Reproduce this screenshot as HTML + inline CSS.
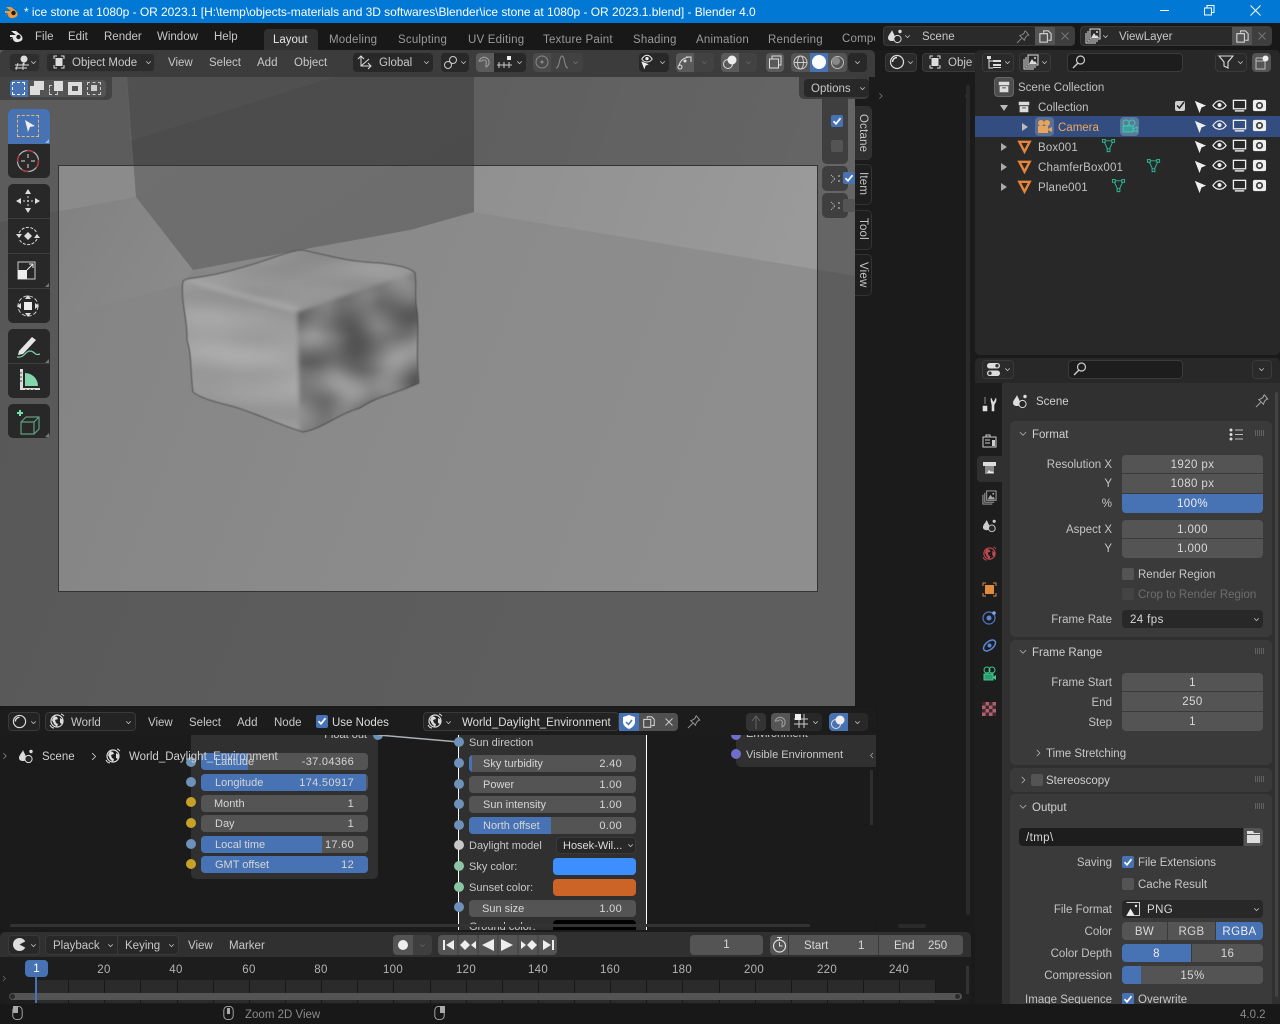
<!DOCTYPE html>
<html><head><meta charset="utf-8"><title>Blender</title>
<style>
html,body{margin:0;padding:0;width:1280px;height:1024px;overflow:hidden;background:#1a1a1a}
body{position:relative;font-family:"Liberation Sans",sans-serif;font-size:11.5px;color:#c8c8c8}
div,p,svg.i{position:absolute}
p{margin:1px 0 0;white-space:nowrap;line-height:14px;letter-spacing:0}
.d{color:#9a9a9a;letter-spacing:.2px}
.w{color:#e6e6e6}
.b{background:#282828;border:1px solid #3a3a3a;border-radius:4px;box-sizing:border-box}
.f{background:#545454;color:#d8d8d8;text-align:center;line-height:20px;letter-spacing:.4px;white-space:nowrap;box-sizing:border-box}
.blue{background:#4772b3;color:#f0f0f0}
.l{left:1010px;width:102px;text-align:right;color:#c4c4c4}
.tb{left:8px;width:42px;background:#282828}
.n{background:#545454;height:17px;border-radius:4px;overflow:hidden}
.n div{left:0;top:0;height:17px;background:#4772b3}
.n p{top:1px;color:#d6d6d6;font-size:11px}
.n p.v{right:14px;letter-spacing:.3px}
.nt{font-size:11px}
.so{width:10px;height:10px;border-radius:5px;background:#6d91b8}
.ck{width:12px;height:12px;background:#545454;border-radius:2px}
.ck.on{background:#4772b3}
.ck svg{position:absolute;left:0;top:0}
.num{top:962px;width:40px;text-align:center;color:#b4b4b4;letter-spacing:.3px}
.tick{width:1px;background:#181818;top:980px;height:23px}
.tab{left:855px;width:17px;background:#1e1e1e;border:1px solid #333;border-left:0;border-radius:0 5px 5px 0;box-sizing:border-box}
.tab p{transform:rotate(90deg);transform-origin:0 0;left:15px;top:6px;color:#c4c4c4;letter-spacing:.2px}
svg{overflow:visible}
</style></head><body>
<svg width="0" height="0" style="position:absolute">
<defs>
<symbol id="ch" viewBox="0 0 16 16"><path d="M4 6l4 4 4-4" fill="none" stroke="currentColor" stroke-width="1.4"/></symbol>
<symbol id="cr" viewBox="0 0 16 16"><path d="M6 3l5 5-5 5" fill="none" stroke="currentColor" stroke-width="1.2"/></symbol>
<symbol id="cd" viewBox="0 0 16 16"><path d="M3 5l5 5 5-5" fill="none" stroke="currentColor" stroke-width="1.2"/></symbol>
<symbol id="sc" viewBox="0 0 16 16"><path d="M5 2c1 3 3 5 3 8 0 2-1 3-3 3s-4-1-4-3c0-3 3-5 4-8z" fill="currentColor"/><circle cx="13" cy="3.5" r="1.7" fill="currentColor"/><circle cx="10.5" cy="11" r="3.6" fill="#282828" stroke="currentColor"/></symbol>
<symbol id="gl" viewBox="0 0 16 16"><circle cx="8" cy="8" r="6" fill="none" stroke="currentColor" stroke-width="1.2"/><path d="M5 3l3 1 1 2-3 1 1 3 2 1-1 3-3-3-2-4zM11 5l3 2-1 4-2-1z" fill="currentColor"/><path d="M1 12c1 2 2 3 4 3M15 3c-1-1-2-2-3-2" fill="none" stroke="currentColor"/></symbol>
<symbol id="pi" viewBox="0 0 16 16"><path d="M1 15l5-5M4 7l5 5 1-3 3-3 1 1-4-5-1 1 0 1-2 2z" fill="none" stroke="currentColor" stroke-width="1"/></symbol>
<symbol id="co" viewBox="0 0 16 16"><path d="M6 4V2h5l3 3v7h-3M2 5h8v9H2z" fill="none" stroke="currentColor" stroke-width="1.1"/></symbol>
<symbol id="x" viewBox="0 0 16 16"><path d="M4 4l8 8M12 4l-8 8" fill="none" stroke="currentColor" stroke-width="1.1"/></symbol>
<symbol id="ar" viewBox="0 0 16 16"><path d="M2 2l12 5-5 2-2 6z" fill="currentColor"/></symbol>
<symbol id="ey" viewBox="0 0 16 16"><path d="M1 8c2-3 4-5 7-5s5 2 7 5c-2 3-4 4-7 4s-5-1-7-4z" fill="none" stroke="currentColor" stroke-width="1.3"/><circle cx="8" cy="7.5" r="2.2" fill="currentColor"/></symbol>
<symbol id="mo" viewBox="0 0 16 16"><rect x="1.500" y="2.500" width="13" height="9" fill="none" stroke="currentColor" stroke-width="1.4"/><path d="M3 13h10v1.500H3z" fill="currentColor"/></symbol>
<symbol id="cm" viewBox="0 0 16 16"><rect x="1" y="2" width="14" height="12" rx="2" fill="currentColor"/><circle cx="8" cy="8" r="3.800" fill="#3a3a3a"/><circle cx="8" cy="8" r="2" fill="currentColor"/></symbol>
<symbol id="ob" viewBox="0 0 16 16"><path d="M2.5 3h11L8 13.5z" fill="none" stroke="currentColor" stroke-width="2.6"/></symbol>
<symbol id="me" viewBox="0 0 16 16"><path d="M3 3h10L8 14z" fill="none" stroke="currentColor"/><path d="M1.5 1.5h3v3h-3zM11.5 1.5h3v3h-3zM6.5 11.5h3v3h-3z" fill="#282828" stroke="currentColor"/></symbol>
<symbol id="cl" viewBox="0 0 16 16"><path d="M2 2h12v4H2z" fill="currentColor"/><path d="M3 7h10v7H3z" fill="currentColor"/><path d="M6 9h4" stroke="#333"/></symbol>
<symbol id="se" viewBox="0 0 16 16"><circle cx="9.5" cy="6" r="4" fill="none" stroke="currentColor" stroke-width="1.2"/><path d="M7 9l-5 5" stroke="currentColor" stroke-width="1.4"/></symbol>
<symbol id="vl" viewBox="0 0 16 16"><path d="M5 1h10v10H5z" fill="none" stroke="currentColor"/><path d="M3 3v10h10M1 5v10h10" fill="none" stroke="currentColor"/><path d="M6 10l3-5 2 3 1-1 2 3z" fill="currentColor"/><circle cx="12" cy="4" r="1" fill="currentColor"/></symbol>
<symbol id="vp" viewBox="0 0 16 16"><path d="M1 11h14M1 14h12M4 9l-2 7M9 9v7" stroke="currentColor" fill="none" stroke-width=".9"/><circle cx="10" cy="5" r="3.5" fill="currentColor"/><path d="M10 8v3" stroke="currentColor"/></symbol>
<symbol id="mm" viewBox="0 0 16 16"><path d="M3 5V2h3M10 2h3v3M13 11v3h-3M6 14H3v-3" fill="none" stroke="currentColor"/><rect x="4.5" y="4" width="7" height="8" fill="currentColor"/></symbol>
<symbol id="nd" viewBox="0 0 16 16"><circle cx="8" cy="8" r="6.5" fill="none" stroke="currentColor" stroke-width="1.2"/><path d="M3.5 8A4.5 4.5 0 0 1 8 3.5" fill="none" stroke="currentColor" stroke-width="1.5"/></symbol>
<symbol id="ms" viewBox="0 0 16 16"><rect x="3" y="1" width="10" height="14" rx="4" fill="none" stroke="currentColor"/></symbol>
<symbol id="fi" viewBox="0 0 16 16"><path d="M1 2h14l-5 6v6l-4-2V8z" fill="none" stroke="currentColor" stroke-width="1.1"/></symbol>
<symbol id="ol" viewBox="0 0 16 16"><path d="M1 2h4v3H1zM7 6h8v2H7zM7 10h8v2H7zM7 14h8v-1H7z" fill="currentColor"/><path d="M3 5v9h4M3 7h4" fill="none" stroke="currentColor"/></symbol>
<symbol id="ck" viewBox="0 0 12 12"><path d="M2.5 6.2l2.5 2.6 4.5-5.6" fill="none" stroke="#fff" stroke-width="1.7"/></symbol>
<symbol id="dt" viewBox="0 0 12 8"><path d="M1 1h1M3 1h1M5 1h1M7 1h1M9 1h1M1 3h1M3 3h1M5 3h1M7 3h1M9 3h1M1 5h1M3 5h1M5 5h1M7 5h1M9 5h1" stroke="currentColor"/></symbol>
<symbol id="bl" viewBox="0 0 16 16"><path d="M1 7h6L2 3h5l5 4c2 2 2 5 0 6s-5 2-7 0c-1-1-1-2-1-3L1 12l3-3H1z" fill="currentColor"/><circle cx="9.5" cy="9" r="2.2" fill="#181818"/></symbol>
</defs></svg>

<!-- title bar -->
<div style="left:0;top:0;width:1280px;height:23px;background:#0078d4"></div>
<svg class="i" style="left:4px;top:4px;color:#ef9a3c" width="16" height="16"><use href="#bl"/></svg>
<p style="left:24px;top:4px;color:#fff;font-size:12px;letter-spacing:-.04px">* ice stone at 1080p - OR 2023.1 [H:\temp\objects-materials and 3D softwares\Blender\ice stone at 1080p - OR 2023.1.blend] - Blender 4.0</p>
<div style="left:1160px;top:10px;width:9px;height:1px;background:#fff"></div>
<svg class="i" style="left:1204px;top:5px" width="11" height="11"><path d="M.5 3h7v7h-7zM3 3V.5h7v7H8" fill="none" stroke="#fff"/></svg>
<svg class="i" style="left:1250px;top:5px" width="11" height="11"><path d="M.5.5l10 10M10.500.5l-10 10" stroke="#fff"/></svg>

<!-- top bar -->
<div style="left:0;top:23px;width:1280px;height:27px;background:#181818"></div>
<svg class="i" style="left:9px;top:28px;color:#e6e6e6" width="16" height="16"><use href="#bl"/></svg>
<p style="left:35px;top:29px">File</p><p style="left:68px;top:29px">Edit</p><p style="left:104px;top:29px">Render</p><p style="left:157px;top:29px">Window</p><p style="left:214px;top:29px">Help</p>
<div style="left:264px;top:29px;width:54px;height:21px;background:#303030;border-radius:4px 4px 0 0"></div>
<p class="w" style="left:273px;top:32px">Layout</p>
<p class="d" style="left:329px;top:32px">Modeling</p><p class="d" style="left:398px;top:32px">Sculpting</p><p class="d" style="left:468px;top:32px">UV Editing</p><p class="d" style="left:543px;top:32px">Texture Paint</p><p class="d" style="left:633px;top:32px">Shading</p><p class="d" style="left:696px;top:32px">Animation</p><p class="d" style="left:768px;top:32px">Rendering</p>
<div style="left:842px;top:30px;width:33px;height:18px;overflow:hidden"><p class="d" style="left:0;top:1px">Compositing</p></div>
<!-- scene selectors -->
<div class="b" style="left:883px;top:26px;width:192px;height:20px;background:#2a2a2a"></div>
<svg class="i" style="left:887px;top:28px;color:#ddd" width="16" height="16"><use href="#sc"/></svg><svg class="i" style="left:903px;top:32px;color:#ccc" width="9" height="9"><use href="#ch"/></svg>
<p style="left:922px;top:29px">Scene</p>
<svg class="i" style="left:1016px;top:29px;color:#888" width="15" height="15"><use href="#pi"/></svg>
<div style="left:1035px;top:27px;width:20px;height:18px;background:#545454"></div>
<svg class="i" style="left:1038px;top:29px;color:#ddd" width="15" height="15"><use href="#co"/></svg>
<div style="left:1055px;top:27px;width:20px;height:18px;background:#3e3e3e;border-radius:0 4px 4px 0"></div>
<svg class="i" style="left:1058px;top:29px;color:#777" width="14" height="14"><use href="#x"/></svg>
<div class="b" style="left:1080px;top:26px;width:192px;height:20px;background:#2a2a2a"></div>
<svg class="i" style="left:1085px;top:28px;color:#ddd" width="16" height="16"><use href="#vl"/></svg><svg class="i" style="left:1101px;top:32px;color:#ccc" width="9" height="9"><use href="#ch"/></svg>
<p style="left:1119px;top:29px">ViewLayer</p>
<div style="left:1232px;top:27px;width:20px;height:18px;background:#545454"></div>
<svg class="i" style="left:1235px;top:29px;color:#ddd" width="15" height="15"><use href="#co"/></svg>
<div style="left:1252px;top:27px;width:20px;height:18px;background:#3e3e3e;border-radius:0 4px 4px 0"></div>
<svg class="i" style="left:1255px;top:29px;color:#777" width="14" height="14"><use href="#x"/></svg>

<!-- 3D viewport -->
<svg class="i" style="left:0;top:50px" width="856" height="656" viewBox="0 50 856 656">
<defs>
<linearGradient id="gf" x1="0" y1="0" x2="1" y2=".3"><stop offset="0" stop-color="#828282"/><stop offset=".6" stop-color="#8b8b8b"/><stop offset="1" stop-color="#8e8e8e"/></linearGradient>
<linearGradient id="gw" x1="0" y1="0" x2="1" y2=".2"><stop offset="0" stop-color="#8f8f8f"/><stop offset="1" stop-color="#9a9a9a"/></linearGradient>
<linearGradient id="gd" x1="0" y1="0" x2="1" y2="1"><stop offset="0" stop-color="#707070"/><stop offset="1" stop-color="#6c6c6c"/></linearGradient>
<linearGradient id="gl2" x1="0" y1="0" x2="1" y2=".4"><stop offset="0" stop-color="#7e7e7e"/><stop offset="1" stop-color="#8a8a8a"/></linearGradient>
<filter id="nr" x="0" y="0" width="100%" height="100%" color-interpolation-filters="sRGB"><feTurbulence type="fractalNoise" baseFrequency=".024 .03" numOctaves="1" seed="7"/><feColorMatrix values=".75 0 0 0 .09 .75 0 0 0 .09 .75 0 0 0 .09 0 0 0 0 1"/></filter>
<filter id="nl" x="0" y="0" width="100%" height="100%" color-interpolation-filters="sRGB"><feTurbulence type="fractalNoise" baseFrequency=".012 .035" numOctaves="1" seed="3"/><feColorMatrix values=".22 0 0 0 .51 .22 0 0 0 .51 .22 0 0 0 .51 0 0 0 0 1"/></filter>
<filter id="nt" x="0" y="0" width="100%" height="100%" color-interpolation-filters="sRGB"><feTurbulence type="fractalNoise" baseFrequency=".012 .045" numOctaves="1" seed="11"/><feColorMatrix values=".18 0 0 0 .49 .18 0 0 0 .49 .18 0 0 0 .49 0 0 0 0 1"/></filter>
<filter id="b2" x="-20%" y="-20%" width="140%" height="140%"><feGaussianBlur stdDeviation="3"/></filter>
<filter id="b3" x="-5%" y="-5%" width="110%" height="110%"><feGaussianBlur stdDeviation=".6"/></filter>
<filter id="b4" x="-5%" y="-5%" width="110%" height="110%"><feGaussianBlur stdDeviation="2.200"/></filter>
<clipPath id="cu"><path id="cup" d="M183 281C190 276 200 280 240 268 270 260 290 250 303 250 330 256 350 262 380 263 395 265 410 267 415 273 417 285 414 295 417 310 420 330 415 345 419 383 400 392 380 395 360 408 335 415 325 428 303 432 280 425 260 415 235 407 215 402 200 398 193 392 190 370 192 355 187 340 188 320 180 300 183 281Z"/></clipPath>
<clipPath id="top"><path d="M175 240H425V272L297 314 180 280Z"/></clipPath>
<clipPath id="rt"><path d="M297 312L420 270V440H300Z"/></clipPath>
<clipPath id="lt"><path d="M175 280L297 312 303 440H175Z"/></clipPath>
</defs>
<rect x="0" y="50" width="856" height="656" fill="url(#gf)"/>
<path d="M0 222L136 197 193 268 182 284 0 333Z" fill="url(#gl2)"/>
<path d="M0 50H125L136 197 0 222Z" fill="#8b8b8b"/>
<path d="M474 50H856V276L474 212Z" fill="url(#gw)"/>
<path d="M125 50H474V212L410 230 300 250 193 270 136 197Z" fill="url(#gd)"/>
<path d="M125 50H420L130 141Z" fill="#fff" opacity=".05"/>
<!-- cube -->
<g clip-path="url(#cu)"><g filter="url(#b4)">
<g clip-path="url(#top)"><rect x="170" y="240" width="260" height="80" filter="url(#nt)"/>
<path d="M184 283L297 312" stroke="#b4b4b4" stroke-width="6" filter="url(#b2)"/></g>
<g clip-path="url(#lt)"><rect x="170" y="270" width="140" height="170" filter="url(#nl)"/></g>
<g clip-path="url(#rt)"><rect x="295" y="260" width="130" height="180" filter="url(#nr)"/></g>
</g></g>
<use href="#cup" fill="none" stroke="#444" stroke-opacity=".75" stroke-width="1.100" filter="url(#b3)"/>
<!-- passepartout -->
<path fill-rule="evenodd" d="M0 50H856V706H0ZM59 165V591H817V165Z" fill="#1c1c1c" fill-opacity=".42"/>
<rect x="58.500" y="165.500" width="759" height="426" fill="none" stroke="#333"/>
</svg>
<div style="left:855px;top:50px;width:23px;height:656px;background:#1b1b1b"></div>
<!-- header -->
<div style="left:0;top:50px;width:875px;height:27px;background:#3c3c3c;border-radius:5px 5px 0 0"></div>
<div style="left:0;top:77px;width:112px;height:23px;background:rgba(62,62,62,.85);border-radius:0 0 5px 0"></div>
<div class="b" style="left:9px;top:53px;width:31px;height:19px;background:#2e2e2e"></div>
<svg class="i" style="left:14px;top:54px;color:#ddd" width="16" height="16"><use href="#vp"/></svg><svg class="i" style="left:29px;top:58px;color:#ccc" width="9" height="9"><use href="#ch"/></svg>
<div class="b" style="left:46px;top:53px;width:109px;height:19px;background:#2c2c2c"></div>
<svg class="i" style="left:51px;top:54px;color:#ddd" width="16" height="16"><use href="#mm"/></svg>
<p style="left:72px;top:55px">Object Mode</p><svg class="i" style="left:144px;top:58px;color:#ccc" width="9" height="9"><use href="#ch"/></svg>
<p style="left:168px;top:55px">View</p><p style="left:209px;top:55px">Select</p><p style="left:257px;top:55px">Add</p><p style="left:294px;top:55px">Object</p>
<div style="left:353px;top:53px;width:80px;height:19px;background:#282828;border-radius:4px"></div>
<svg class="i" style="left:357px;top:54px" width="16" height="16"><path d="M4 2v10h10M4 12l8-7M1 5l3-3 3 3M11 9l3 3-3 3" fill="none" stroke="#ddd"/></svg>
<p style="left:379px;top:55px">Global</p><svg class="i" style="left:422px;top:58px;color:#ccc" width="9" height="9"><use href="#ch"/></svg>
<div style="left:441px;top:53px;width:28px;height:19px;background:#282828;border-radius:4px"></div>
<svg class="i" style="left:443px;top:55px" width="15" height="15"><circle cx="5" cy="10" r="3.500" fill="none" stroke="#ccc"/><circle cx="10" cy="5" r="3.500" fill="none" stroke="#ccc"/></svg><svg class="i" style="left:459px;top:58px;color:#ccc" width="9" height="9"><use href="#ch"/></svg>
<div style="left:476px;top:53px;width:18px;height:19px;background:#5a5a5a;border-radius:4px 0 0 4px"></div>
<svg class="i" style="left:477px;top:54px" width="16" height="16"><path d="M3 11a5 5 0 1 1 9 0l-2-2a2.500 2.500 0 1 0-5 0z" fill="none" stroke="#999" stroke-width="1.200" transform="rotate(40 8 8)"/></svg>
<div style="left:494px;top:53px;width:32px;height:19px;background:#282828;border-radius:0 4px 4px 0"></div>
<svg class="i" style="left:497px;top:55px" width="16" height="15"><path d="M0 10h15M2 7v6M7 7v6M12 7v6" stroke="#ccc" fill="none"/><rect x="10" y="1" width="4" height="4" fill="#eee"/></svg>
<svg class="i" style="left:515px;top:58px;color:#ccc" width="9" height="9"><use href="#ch"/></svg>
<div style="left:533px;top:53px;width:18px;height:19px;background:#4a4a4a;border-radius:4px 0 0 4px"></div>
<svg class="i" style="left:535px;top:55px" width="14" height="14"><circle cx="7" cy="7" r="6" fill="none" stroke="#888"/><circle cx="7" cy="7" r="1.500" fill="#888"/></svg>
<div style="left:551px;top:53px;width:32px;height:19px;background:#424242;border-radius:0 4px 4px 0"></div>
<svg class="i" style="left:555px;top:55px" width="15" height="14"><path d="M1 13c4 0 3-12 6-12s2 12 6 12" fill="none" stroke="#888"/></svg>
<svg class="i" style="left:571px;top:58px;color:#777" width="9" height="9"><use href="#ch"/></svg>
<div style="left:639px;top:53px;width:30px;height:19px;background:#282828;border-radius:4px"></div>
<svg class="i" style="left:641px;top:53px;color:#eee" width="12" height="12"><use href="#ey"/></svg><svg class="i" style="left:640px;top:60px;color:#eee" width="10" height="10"><use href="#ar"/></svg><svg class="i" style="left:658px;top:58px;color:#ccc" width="9" height="9"><use href="#ch"/></svg>
<div style="left:676px;top:53px;width:18px;height:19px;background:#5a5a5a;border-radius:4px 0 0 4px"></div>
<svg class="i" style="left:677px;top:54px" width="16" height="16"><path d="M2 12C3 6 8 3 13 3M9 3h5v5" fill="none" stroke="#ddd"/><circle cx="3" cy="13" r="2" fill="none" stroke="#ddd"/><circle cx="8" cy="7" r="1.500" fill="#ddd"/></svg>
<div style="left:694px;top:53px;width:20px;height:19px;background:#424242;border-radius:0 4px 4px 0"></div><svg class="i" style="left:700px;top:58px;color:#666" width="9" height="9"><use href="#ch"/></svg>
<div style="left:721px;top:53px;width:18px;height:19px;background:#5a5a5a;border-radius:4px 0 0 4px"></div>
<svg class="i" style="left:722px;top:54px" width="16" height="16"><circle cx="6" cy="10" r="4.500" fill="none" stroke="#ddd"/><circle cx="10" cy="6" r="4.500" fill="#eee"/></svg>
<div style="left:739px;top:53px;width:18px;height:19px;background:#424242;border-radius:0 4px 4px 0"></div><svg class="i" style="left:744px;top:58px;color:#666" width="9" height="9"><use href="#ch"/></svg>
<div style="left:766px;top:53px;width:18px;height:19px;background:#5a5a5a;border-radius:4px"></div>
<svg class="i" style="left:768px;top:55px" width="15" height="15"><path d="M4 4V1h9v9h-3M1.500 4h9v9h-9z" fill="none" stroke="#ddd"/></svg>
<div style="left:791px;top:53px;width:19px;height:19px;background:#545454;border-radius:4px 0 0 4px"></div>
<svg class="i" style="left:793px;top:55px" width="15" height="15"><circle cx="7.500" cy="7.500" r="6.500" fill="none" stroke="#ccc"/><ellipse cx="7.500" cy="7.500" rx="3" ry="6.500" fill="none" stroke="#ccc"/><path d="M1 7.500h13" stroke="#ccc"/></svg>
<div style="left:810px;top:53px;width:18px;height:19px;background:#4772b3"></div>
<div style="left:812px;top:55px;width:14px;height:14px;border-radius:7px;background:#fff"></div>
<div style="left:828px;top:53px;width:19px;height:19px;background:#545454;border-radius:0 4px 4px 0"></div>
<svg class="i" style="left:830px;top:55px" width="15" height="15"><circle cx="7.500" cy="7.500" r="6" fill="none" stroke="#bbb"/><circle cx="6" cy="6" r="4" fill="#888"/></svg>
<div style="left:848px;top:53px;width:19px;height:19px;background:#282828;border-radius:4px"></div><svg class="i" style="left:853px;top:58px;color:#ccc" width="9" height="9"><use href="#ch"/></svg>
<!-- select mode row -->
<div style="left:10px;top:80px;width:96px;height:17px;background:#545454;border-radius:4px"></div>
<div style="left:10px;top:80px;width:18px;height:17px;background:#4772b3;border-radius:4px 0 0 4px"></div>
<div style="left:12px;top:82px;width:13px;height:13px;border:1px dashed #fff;box-sizing:border-box"></div>
<svg class="i" style="left:30px;top:81px" width="15" height="15"><path d="M0 5h4V0h10v9h-4v5H0z" fill="#ddd"/></svg>
<div style="left:49px;top:85px;width:9px;height:10px;border:1px dashed #ccc;box-sizing:border-box"></div><div style="left:54px;top:81px;width:9px;height:10px;background:#ddd"></div>
<div style="left:68px;top:82px;width:14px;height:13px;background:#ddd"></div><div style="left:72px;top:86px;width:6px;height:5px;background:#555"></div>
<div style="left:87px;top:82px;width:14px;height:13px;border:1px dashed #ccc;box-sizing:border-box"></div><div style="left:91px;top:85px;width:6px;height:6px;background:#ccc"></div>
<!-- options -->
<div style="left:799px;top:77px;width:70px;height:22px;background:rgba(62,62,62,.95);border-radius:0 0 5px 5px"></div>
<div style="left:804px;top:79px;width:65px;height:18px;background:#282828;border-radius:4px"></div>
<p style="left:811px;top:81px">Options</p><svg class="i" style="left:858px;top:84px;color:#ccc" width="9" height="9"><use href="#ch"/></svg>
<!-- toolbar -->
<div class="tb" style="top:109px;height:69px;border-radius:5px"></div>
<div class="tb" style="top:109px;height:35px;background:#4772b3;border-radius:5px 5px 0 0"></div>
<div style="left:17px;top:115px;width:22px;height:22px;border:1px dashed #e6b873;box-sizing:border-box"></div>
<svg class="i" style="left:24px;top:120px;color:#eee" width="12" height="12"><path d="M1 0l10 6-5 1-2 5z" fill="#eee"/></svg>
<svg class="i" style="left:16px;top:149px" width="24" height="24"><circle cx="12" cy="12" r="10.500" fill="none" stroke="#bbb" stroke-width="1.200"/><circle cx="12" cy="12" r="10.500" fill="none" stroke="#c0323f" stroke-width="1.200" stroke-dasharray="7 9"/><path d="M12 5v4M12 15v4M5 12h4M15 12h4" stroke="#ddd"/></svg>
<div class="tb" style="top:184px;height:139px;border-radius:5px"></div>
<div style="left:8px;top:218px;width:42px;height:1px;background:#3e3e3e"></div><div style="left:8px;top:253px;width:42px;height:1px;background:#3e3e3e"></div><div style="left:8px;top:288px;width:42px;height:1px;background:#3e3e3e"></div>
<svg class="i" style="left:16px;top:189px" width="24" height="24"><path d="M12 0l3 5H9zM12 24l3-5H9zM0 12l5-3v6zM24 12l-5-3v6z" fill="#ddd"/><path d="M12 7v10M7 12h10" stroke="#ddd" stroke-dasharray="2 2"/></svg>
<svg class="i" style="left:16px;top:224px" width="24" height="24"><path d="M3 9a10 10 0 0 1 18 0M21 15a10 10 0 0 1-18 0" fill="none" stroke="#ddd" stroke-dasharray="3 1.500"/><path d="M12 8l4 4-4 4-4-4zM0 10l6 0-3 4zM24 14l-6 0 3-4z" fill="#ddd"/></svg>
<svg class="i" style="left:17px;top:261px" width="22" height="22"><rect x="1" y="1" width="17" height="17" fill="none" stroke="#ccc"/><rect x="1" y="9" width="9" height="9" fill="#eee"/><path d="M10 9l6-6M12 3h4v4" fill="none" stroke="#eee"/></svg>
<svg class="i" style="left:16px;top:294px" width="24" height="24"><circle cx="12" cy="12" r="10" fill="none" stroke="#ccc" stroke-dasharray="4 2"/><rect x="8" y="8" width="8" height="8" fill="#eee"/><path d="M12 1l3 4H9zM12 23l3-4H9zM1 12l4-3v6zM23 12l-4-3v6z" fill="#ddd"/></svg>
<div class="tb" style="top:329px;height:69px;border-radius:5px"></div><div style="left:8px;top:363px;width:42px;height:1px;background:#3e3e3e"></div>
<svg class="i" style="left:15px;top:334px" width="27" height="24"><path d="M4 17L17 3l4 3L8 20l-5 1z" fill="#e6e6e6"/><path d="M2 23c8 1 8-6 13-6s4 5 10 3" fill="none" stroke="#7fd0a8" stroke-width="1.200"/></svg>
<svg class="i" style="left:17px;top:368px" width="24" height="24"><path d="M3 1h3v19h17v2H3z" fill="#ddd"/><path d="M8 18V5a13 13 0 0 1 13 13z" fill="#82d8ac"/><path d="M3 5h2M3 9h2M3 13h2M9 21v1M13 21v1M17 21v1" stroke="#444"/></svg>
<div class="tb" style="top:404px;height:34px;border-radius:5px"></div>
<svg class="i" style="left:15px;top:409px" width="26" height="26"><path d="M2 4h6M5 1v6" stroke="#6fe0a8" stroke-width="2"/><path d="M6 13l5-5h13v12l-5 5H6zM6 13h13v12M19 13l5-5" fill="none" stroke="#5f9f7f" stroke-width="1.200"/></svg>
<svg class="i" style="left:45px;top:139px" width="4" height="4"><path d="M4 0v4H0z" fill="#9ab5e0"/></svg>
<svg class="i" style="left:45px;top:283px" width="4" height="4"><path d="M4 0v4H0z" fill="#777"/></svg>
<svg class="i" style="left:45px;top:359px" width="4" height="4"><path d="M4 0v4H0z" fill="#777"/></svg>
<svg class="i" style="left:45px;top:433px" width="4" height="4"><path d="M4 0v4H0z" fill="#777"/></svg>
<!-- panels over viewport -->
<div style="left:822px;top:98px;width:26px;height:66px;background:rgba(60,60,60,.92);border-radius:0 0 5px 5px"></div>
<div class="ck on" style="left:831px;top:115px"><svg width="12" height="12"><use href="#ck"/></svg></div>
<div class="ck" style="left:831px;top:140px"></div>
<div style="left:822px;top:166px;width:26px;height:25px;background:rgba(60,60,60,.92);border-radius:5px"></div>
<div style="left:822px;top:193px;width:26px;height:25px;background:rgba(60,60,60,.92);border-radius:5px"></div>
<svg class="i" style="left:830px;top:174px" width="12" height="10"><path d="M1 1l4 4-4 4" fill="none" stroke="#ccc" stroke-dasharray="1 1"/><path d="M8 2h2M8 7h2" stroke="#ccc"/></svg>
<svg class="i" style="left:830px;top:201px" width="12" height="10"><path d="M1 1l4 4-4 4" fill="none" stroke="#ccc" stroke-dasharray="1 1"/><path d="M8 2h2M8 7h2" stroke="#ccc"/></svg>
<div class="ck on" style="left:843px;top:172px"><svg width="12" height="12"><use href="#ck"/></svg></div>
<div class="ck" style="left:843px;top:199px;height:13px"></div>
<!-- side tabs -->
<div class="tab" style="top:106px;height:54px;background:#303030"><p>Octane</p></div>
<div class="tab" style="top:164px;height:41px"><p>Item</p></div>
<div class="tab" style="top:210px;height:40px"><p>Tool</p></div>
<div class="tab" style="top:254px;height:42px"><p>View</p></div>

<!-- narrow dark col -->
<div style="left:878px;top:50px;width:97px;height:882px;background:#1b1b1b"></div>
<div class="b" style="left:885px;top:53px;width:32px;height:19px;background:#2a2a2a"></div>
<svg class="i" style="left:889px;top:54px;color:#ddd" width="16" height="16"><use href="#nd"/></svg><svg class="i" style="left:906px;top:58px;color:#ccc" width="9" height="9"><use href="#ch"/></svg>
<div class="b" style="left:922px;top:53px;width:53px;height:19px;background:#2a2a2a;border-right:0;border-radius:4px 0 0 4px"></div>
<svg class="i" style="left:927px;top:54px;color:#ddd" width="16" height="16"><use href="#mm"/></svg>
<p style="left:948px;top:55px">Obje</p>
<svg class="i" style="left:876px;top:91px;color:#888" width="9" height="10"><use href="#cr"/></svg>
<svg class="i" style="left:963px;top:91px;color:#888;transform:scaleX(-1)" width="9" height="10"><use href="#cr"/></svg>
<div style="left:966px;top:85px;width:4px;height:830px;background:#2a2a2a;border-radius:2px"></div>
<div style="left:898px;top:924px;width:28px;height:4px;background:#2a2a2a;border-radius:2px"></div>

<!-- outliner -->
<div style="left:975px;top:50px;width:305px;height:305px;background:#282828;border-radius:5px"></div>
<div class="b" style="left:982px;top:53px;width:32px;height:19px;background:#2a2a2a"></div>
<svg class="i" style="left:986px;top:54px;color:#ddd" width="16" height="16"><use href="#ol"/></svg><svg class="i" style="left:1003px;top:58px;color:#ccc" width="9" height="9"><use href="#ch"/></svg>
<div class="b" style="left:1019px;top:53px;width:32px;height:19px;background:#2a2a2a"></div>
<svg class="i" style="left:1023px;top:54px;color:#ddd" width="16" height="16"><use href="#vl"/></svg><svg class="i" style="left:1040px;top:58px;color:#ccc" width="9" height="9"><use href="#ch"/></svg>
<div class="b" style="left:1067px;top:53px;width:116px;height:19px;background:#1d1d1d"></div>
<svg class="i" style="left:1071px;top:54px;color:#ccc" width="16" height="16"><use href="#se"/></svg>
<div class="b" style="left:1215px;top:53px;width:32px;height:19px;background:#2a2a2a"></div>
<svg class="i" style="left:1218px;top:54px;color:#ddd" width="16" height="16"><use href="#fi"/></svg><svg class="i" style="left:1236px;top:58px;color:#ccc" width="9" height="9"><use href="#ch"/></svg>
<div style="left:1252px;top:53px;width:19px;height:19px;background:#545454;border-radius:4px"></div>
<svg class="i" style="left:1254px;top:55px" width="15" height="15"><path d="M2 3h7M2 3v3h9v8H2V6" fill="none" stroke="#bbb"/><circle cx="11.500" cy="3.500" r="3" fill="#eee"/></svg>
<div style="left:975px;top:116px;width:305px;height:20.500px;background:#334d80"></div>
<div style="left:994px;top:77px;width:20px;height:20px;background:#4d4d4d;border-radius:4px;border:1px solid #666;box-sizing:border-box"></div>
<svg class="i" style="left:997px;top:80px;color:#ddd" width="14" height="14"><use href="#cl"/></svg>
<p style="left:1018px;top:80px;color:#c0c0c0">Scene Collection</p>
<svg class="i" style="left:1000px;top:104px" width="8" height="8"><path d="M0 1h8L4 7z" fill="#bbb"/></svg>
<svg class="i" style="left:1017px;top:100px;color:#ddd" width="14" height="14"><use href="#cl"/></svg>
<p style="left:1038px;top:100px;color:#c0c0c0">Collection</p>
<div class="ck" style="left:1175px;top:101px;width:10px;height:10px;background:#cfcfcf"></div>
<svg class="i" style="left:1176px;top:101px" width="9" height="9"><path d="M1 4.500l2.500 2.500 4.500-6" fill="none" stroke="#222" stroke-width="1.500"/></svg>
<svg class="i" style="left:1021px;top:123px" width="8" height="8"><path d="M1 0v8l6-4z" fill="#bbb"/></svg>
<div style="left:1035px;top:117px;width:19px;height:19px;background:#5b6f94;border-radius:4px"></div>
<svg class="i" style="left:1036px;top:118px" width="17" height="17"><circle cx="5" cy="5" r="3" fill="#e8a45a"/><circle cx="11" cy="5" r="3" fill="#e8a45a"/><rect x="2" y="8" width="10" height="7" fill="#e8a45a"/><path d="M12 11l4-2v5l-4-2z" fill="#e8a45a"/></svg>
<p style="left:1058px;top:120px;color:#eda85e">Camera</p>
<div style="left:1120px;top:117px;width:19px;height:19px;background:#5b7a99;border-radius:4px"></div>
<svg class="i" style="left:1121px;top:118px" width="17" height="17"><circle cx="5" cy="5" r="3" fill="none" stroke="#3dc8b4"/><circle cx="11" cy="5" r="3" fill="none" stroke="#3dc8b4"/><rect x="2" y="8" width="10" height="6" fill="#3f9f9b" stroke="#3dc8b4"/><path d="M12 11l4-2v5l-4-2z" fill="none" stroke="#3dc8b4"/></svg>
<svg class="i" style="left:1000px;top:143px" width="8" height="8"><path d="M1 0v8l6-4z" fill="#aaa"/></svg>
<svg class="i" style="left:1000px;top:163px" width="8" height="8"><path d="M1 0v8l6-4z" fill="#aaa"/></svg>
<svg class="i" style="left:1000px;top:183px" width="8" height="8"><path d="M1 0v8l6-4z" fill="#aaa"/></svg>
<svg class="i" style="left:1017px;top:139px;color:#e5843a" width="15" height="15"><use href="#ob"/></svg>
<svg class="i" style="left:1017px;top:159px;color:#e5843a" width="15" height="15"><use href="#ob"/></svg>
<svg class="i" style="left:1017px;top:179px;color:#e5843a" width="15" height="15"><use href="#ob"/></svg>
<p style="left:1038px;top:140px;color:#c0c0c0;letter-spacing:.15px">Box001</p><p style="left:1038px;top:160px;color:#c0c0c0;letter-spacing:.15px">ChamferBox001</p><p style="left:1038px;top:180px;color:#c0c0c0;letter-spacing:.15px">Plane001</p>
<svg class="i" style="left:1101px;top:138px;color:#2bb898" width="15" height="15"><use href="#me"/></svg>
<svg class="i" style="left:1146px;top:158px;color:#2bb898" width="15" height="15"><use href="#me"/></svg>
<svg class="i" style="left:1111px;top:178px;color:#2bb898" width="15" height="15"><use href="#me"/></svg>
<!-- restriction cols: rows y=107..187 -->
<svg class="i" style="left:1193px;top:99px;color:#eee" width="15" height="15"><use href="#ar"/></svg><svg class="i" style="left:1212px;top:98px;color:#eee" width="15" height="15"><use href="#ey"/></svg><svg class="i" style="left:1232px;top:98px;color:#eee" width="15" height="15"><use href="#mo"/></svg><svg class="i" style="left:1252px;top:98px;color:#eee" width="15" height="15"><use href="#cm"/></svg>
<svg class="i" style="left:1193px;top:119px;color:#eee" width="15" height="15"><use href="#ar"/></svg><svg class="i" style="left:1212px;top:118px;color:#eee" width="15" height="15"><use href="#ey"/></svg><svg class="i" style="left:1232px;top:118px;color:#eee" width="15" height="15"><use href="#mo"/></svg><svg class="i" style="left:1252px;top:118px;color:#eee" width="15" height="15"><use href="#cm"/></svg>
<svg class="i" style="left:1193px;top:139px;color:#eee" width="15" height="15"><use href="#ar"/></svg><svg class="i" style="left:1212px;top:138px;color:#eee" width="15" height="15"><use href="#ey"/></svg><svg class="i" style="left:1232px;top:138px;color:#eee" width="15" height="15"><use href="#mo"/></svg><svg class="i" style="left:1252px;top:138px;color:#eee" width="15" height="15"><use href="#cm"/></svg>
<svg class="i" style="left:1193px;top:159px;color:#eee" width="15" height="15"><use href="#ar"/></svg><svg class="i" style="left:1212px;top:158px;color:#eee" width="15" height="15"><use href="#ey"/></svg><svg class="i" style="left:1232px;top:158px;color:#eee" width="15" height="15"><use href="#mo"/></svg><svg class="i" style="left:1252px;top:158px;color:#eee" width="15" height="15"><use href="#cm"/></svg>
<svg class="i" style="left:1193px;top:179px;color:#eee" width="15" height="15"><use href="#ar"/></svg><svg class="i" style="left:1212px;top:178px;color:#eee" width="15" height="15"><use href="#ey"/></svg><svg class="i" style="left:1232px;top:178px;color:#eee" width="15" height="15"><use href="#mo"/></svg><svg class="i" style="left:1252px;top:178px;color:#eee" width="15" height="15"><use href="#cm"/></svg>

<!-- properties -->
<div style="left:975px;top:358px;width:305px;height:646px;background:#303030;border-radius:5px 5px 0 0;overflow:hidden"></div>
<div style="left:975px;top:358px;width:305px;height:25px;background:#282828;border-radius:5px 5px 0 0"></div>
<div style="left:975px;top:383px;width:27px;height:621px;background:#1d1d1d"></div>
<div class="b" style="left:982px;top:360px;width:32px;height:19px;background:#2a2a2a"></div>
<svg class="i" style="left:986px;top:362px" width="15" height="15"><rect x="1" y="1" width="13" height="5.500" rx="2.700" fill="#ddd"/><rect x="1" y="8.500" width="13" height="5.500" rx="2.700" fill="#ddd"/><circle cx="11" cy="3.700" r="1.700" fill="#333"/><circle cx="4" cy="11.200" r="1.700" fill="#333"/></svg>
<svg class="i" style="left:1003px;top:365px;color:#ccc" width="9" height="9"><use href="#ch"/></svg>
<div class="b" style="left:1068px;top:360px;width:115px;height:19px;background:#1d1d1d"></div>
<svg class="i" style="left:1072px;top:361px;color:#ccc" width="16" height="16"><use href="#se"/></svg>
<div class="b" style="left:1252px;top:360px;width:20px;height:19px;background:#2a2a2a"></div><svg class="i" style="left:1257px;top:365px;color:#ccc" width="9" height="9"><use href="#ch"/></svg>
<div style="left:977px;top:456px;width:25px;height:26px;background:#303030;border-radius:4px 0 0 4px"></div>
<svg class="i" style="left:982px;top:397px" width="15" height="15"><path d="M3 0v7M1 9h4v5H1zM9 1l2 4h1l2-4v3l-2 4v6h-2V8L9 4z" fill="#ddd" stroke="#ddd" stroke-width=".6"/></svg>
<svg class="i" style="left:982px;top:433px" width="15" height="15"><path d="M1 4h13v10H1zM4 2h4v2H4z" fill="none" stroke="#ccc"/><path d="M3 7h5M3 10h5" stroke="#ccc"/><rect x="10" y="7" width="3" height="6" fill="#ccc"/></svg>
<svg class="i" style="left:982px;top:461px" width="15" height="15"><rect x="1" y="1" width="13" height="4" fill="#ddd"/><path d="M3 5h9v8H3z" fill="#888"/><path d="M5 12l2-3 2 2 1-1 2 2z" fill="#eee"/></svg>
<svg class="i" style="left:982px;top:490px;color:#aaa" width="15" height="15"><use href="#vl"/></svg>
<svg class="i" style="left:982px;top:518px;color:#ccc" width="15" height="15"><use href="#sc"/></svg>
<svg class="i" style="left:982px;top:546px;color:#c0484f" width="15" height="15"><use href="#gl"/></svg>
<svg class="i" style="left:982px;top:582px" width="15" height="15"><path d="M1 4V1h3M11 1h3v3M14 11v3h-3M4 14H1v-3" fill="none" stroke="#d08a4a"/><rect x="3" y="3" width="9" height="9" fill="#e08b3e"/></svg>
<svg class="i" style="left:982px;top:610px" width="15" height="15"><circle cx="7" cy="8" r="6" fill="none" stroke="#5078c8" stroke-width="1.200"/><circle cx="7" cy="8" r="2.500" fill="#5b87d8"/><circle cx="12" cy="3" r="1.800" fill="#7aa6e8"/></svg>
<svg class="i" style="left:982px;top:638px" width="15" height="15"><ellipse cx="7.500" cy="7.500" rx="7" ry="4" fill="none" stroke="#5b87d8" stroke-width="1.500" transform="rotate(-40 7.500 7.500)"/><circle cx="7.500" cy="7.500" r="2" fill="#5b87d8"/></svg>
<svg class="i" style="left:982px;top:666px" width="15" height="15"><circle cx="5" cy="4" r="3" fill="none" stroke="#3dc890"/><circle cx="10" cy="4" r="3" fill="none" stroke="#3dc890"/><rect x="2" y="8" width="9" height="6" fill="#2e9b6e" stroke="#3dc890"/><path d="M11 11l3-2v5l-3-2z" fill="#3dc890"/></svg>
<svg class="i" style="left:982px;top:702px" width="14" height="14"><rect width="14" height="14" fill="#b0606e"/><path d="M0 0h3.500v3.500H0zM7 0h3.500v3.500H7zM3.500 3.500H7V7H3.500zM10.500 3.500H14V7h-3.500zM0 7h3.500v3.500H0zM7 7h3.500v3.500H7zM3.500 10.500H7V14H3.500zM10.500 10.500H14V14h-3.500z" fill="#3f2a2f"/></svg>
<svg class="i" style="left:1012px;top:393px;color:#ddd" width="16" height="16"><use href="#sc"/></svg>
<p style="left:1036px;top:394px;color:#d0d0d0">Scene</p>
<svg class="i" style="left:1255px;top:393px;color:#aaa" width="15" height="15"><use href="#pi"/></svg>
<div style="left:1275px;top:392px;width:3px;height:605px;background:#444;border-radius:2px"></div>

<div style="left:1010px;top:421px;width:262px;height:216px;background:#3a3a3a;border-radius:5px"></div>
<div style="left:1010px;top:640px;width:262px;height:125px;background:#3a3a3a;border-radius:5px"></div>
<div style="left:1010px;top:768px;width:262px;height:24px;background:#3a3a3a;border-radius:5px"></div>
<div style="left:1010px;top:794px;width:262px;height:214px;background:#3a3a3a;border-radius:5px 5px 0 0"></div>

<svg class="i" style="left:1018px;top:429px;color:#bbb" width="10" height="10"><use href="#cd"/></svg>
<p style="left:1032px;top:427px;color:#d0d0d0">Format</p>
<svg class="i" style="left:1229px;top:428px" width="15" height="13"><circle cx="2" cy="2" r="1.500" fill="#ddd"/><circle cx="2" cy="6.500" r="1.500" fill="#ddd"/><circle cx="2" cy="11" r="1.500" fill="#ddd"/><path d="M6 2h8M6 6.500h8M6 11h8" stroke="#bbb"/></svg>
<svg class="i" style="left:1254px;top:430px;color:#888" width="12" height="8"><use href="#dt"/></svg>
<p class="l" style="top:457px">Resolution X</p><p class="l" style="top:476px">Y</p><p class="l" style="top:496px">%</p>
<div class="f" style="left:1122px;top:455px;width:141px;height:18px;border-radius:4px 4px 0 0">1920 px</div>
<div class="f" style="left:1122px;top:474px;width:141px;height:19px">1080 px</div>
<div class="f blue" style="left:1122px;top:494px;width:141px;height:19px;border-radius:0 0 4px 4px">100%</div>
<p class="l" style="top:522px">Aspect X</p><p class="l" style="top:541px">Y</p>
<div class="f" style="left:1122px;top:520px;width:141px;height:18px;border-radius:4px 4px 0 0">1.000</div>
<div class="f" style="left:1122px;top:539px;width:141px;height:19px;border-radius:0 0 4px 4px">1.000</div>
<div class="ck" style="left:1122px;top:568px"></div><p style="left:1138px;top:567px;color:#c8c8c8">Render Region</p>
<div class="ck" style="left:1122px;top:588px;background:#444"></div><p style="left:1138px;top:587px;color:#6e6e6e">Crop to Render Region</p>
<p class="l" style="top:612px">Frame Rate</p>
<div class="f" style="left:1122px;top:610px;width:141px;height:18px;background:#282828;text-align:left;padding-left:8px;border-radius:4px">24 fps</div>
<svg class="i" style="left:1252px;top:615px;color:#ccc" width="9" height="9"><use href="#ch"/></svg>

<svg class="i" style="left:1018px;top:647px;color:#bbb" width="10" height="10"><use href="#cd"/></svg>
<p style="left:1032px;top:645px;color:#d0d0d0">Frame Range</p>
<svg class="i" style="left:1254px;top:648px;color:#888" width="12" height="8"><use href="#dt"/></svg>
<p class="l" style="top:675px">Frame Start</p><p class="l" style="top:695px">End</p><p class="l" style="top:715px">Step</p>
<div class="f" style="left:1122px;top:673px;width:141px;height:18px;border-radius:4px 4px 0 0">1</div>
<div class="f" style="left:1122px;top:692px;width:141px;height:19px">250</div>
<div class="f" style="left:1122px;top:712px;width:141px;height:19px;border-radius:0 0 4px 4px">1</div>
<svg class="i" style="left:1033px;top:748px;color:#bbb" width="10" height="10"><use href="#cr"/></svg>
<p style="left:1046px;top:746px;color:#c8c8c8">Time Stretching</p>

<svg class="i" style="left:1018px;top:775px;color:#bbb" width="10" height="10"><use href="#cr"/></svg>
<div class="ck" style="left:1031px;top:774px"></div>
<p style="left:1046px;top:773px;color:#d0d0d0">Stereoscopy</p>
<svg class="i" style="left:1254px;top:776px;color:#888" width="12" height="8"><use href="#dt"/></svg>

<svg class="i" style="left:1018px;top:802px;color:#bbb" width="10" height="10"><use href="#cd"/></svg>
<p style="left:1032px;top:800px;color:#d0d0d0">Output</p>
<svg class="i" style="left:1254px;top:803px;color:#888" width="12" height="8"><use href="#dt"/></svg>
<div class="f" style="left:1019px;top:828px;width:224px;height:18px;background:#1d1d1d;text-align:left;padding-left:7px;border-radius:4px 0 0 4px">/tmp\</div>
<div style="left:1244px;top:828px;width:19px;height:18px;background:#545454;border-radius:0 4px 4px 0"></div>
<svg class="i" style="left:1246px;top:830px" width="15" height="14"><path d="M1 1h6l1 2h6v1H1z" fill="#ddd"/><rect x="1" y="5" width="13" height="8" fill="#ddd"/></svg>
<p class="l" style="top:855px">Saving</p>
<div class="ck on" style="left:1122px;top:856px"><svg width="12" height="12"><use href="#ck"/></svg></div><p style="left:1138px;top:855px">File Extensions</p>
<div class="ck" style="left:1122px;top:878px"></div><p style="left:1138px;top:877px">Cache Result</p>
<p class="l" style="top:902px">File Format</p>
<div class="f" style="left:1122px;top:900px;width:141px;height:18px;background:#282828;text-align:left;padding-left:25px;border-radius:4px">PNG</div>
<svg class="i" style="left:1126px;top:902px" width="14" height="14"><path d="M.5.5h13v13H.5" fill="none" stroke="#ccc"/><path d="M.5 13.500l4-7 4 7z" fill="#eee"/><circle cx="10" cy="4" r="1.200" fill="#eee"/></svg>
<svg class="i" style="left:1252px;top:905px;color:#ccc" width="9" height="9"><use href="#ch"/></svg>
<p class="l" style="top:924px">Color</p>
<div class="f" style="left:1122px;top:922px;width:45px;height:18px;border-radius:4px 0 0 4px">BW</div>
<div class="f" style="left:1168px;top:922px;width:47px;height:18px">RGB</div>
<div class="f blue" style="left:1216px;top:922px;width:47px;height:18px;border-radius:0 4px 4px 0">RGBA</div>
<p class="l" style="top:946px">Color Depth</p>
<div class="f blue" style="left:1122px;top:944px;width:69px;height:18px;border-radius:4px 0 0 4px">8</div>
<div class="f" style="left:1192px;top:944px;width:71px;height:18px;border-radius:0 4px 4px 0">16</div>
<p class="l" style="top:968px">Compression</p>
<div class="f" style="left:1122px;top:966px;width:141px;height:18px;border-radius:4px">15%</div>
<div style="left:1122px;top:966px;width:19px;height:18px;background:#4772b3;border-radius:4px 0 0 4px"></div>
<p class="l" style="top:992px">Image Sequence</p>
<div class="ck on" style="left:1122px;top:993px"><svg width="12" height="12"><use href="#ck"/></svg></div><p style="left:1138px;top:992px">Overwrite</p>

<!-- node editor -->
<div style="left:0;top:708px;width:876px;height:222px;background:#1b1b1b;border-radius:5px;overflow:hidden"></div>
<!-- node1 -->
<div style="left:191px;top:735px;width:187px;height:144px;background:#303030;border-radius:0 0 5px 5px"></div>
<div style="left:300px;top:728px;width:70px;height:14px;overflow:hidden"><p class="nt" style="right:3px;top:-1px;color:#c8c8c8">Float out</p></div>
<div class="n" style="left:201px;top:753px;width:167px"><div style="width:47px"></div><p style="left:14px">Latitude</p><p class="v">-37.04366</p></div>
<div class="n" style="left:201px;top:774px;width:167px"><div style="width:165px"></div><p style="left:14px">Longitude</p><p class="v">174.50917</p></div>
<div class="n" style="left:201px;top:795px;width:167px"><p style="left:13px">Month</p><p class="v">1</p></div>
<div class="n" style="left:201px;top:815px;width:167px"><p style="left:14px">Day</p><p class="v">1</p></div>
<div class="n" style="left:201px;top:836px;width:167px"><div style="width:121px"></div><p style="left:14px">Local time</p><p class="v">17.60</p></div>
<div class="n" style="left:201px;top:856px;width:167px"><div style="width:167px"></div><p style="left:14px">GMT offset</p><p class="v">12</p></div>
<div class="so" style="left:186px;top:757px"></div><div class="so" style="left:186px;top:777px"></div><div class="so" style="left:186px;top:797px;background:#c7a227"></div><div class="so" style="left:186px;top:818px;background:#c7a227"></div><div class="so" style="left:186px;top:839px"></div><div class="so" style="left:186px;top:859px;background:#c7a227"></div>
<div class="so" style="left:373px;top:730px"></div>
<svg class="i" style="left:375px;top:730px" width="90" height="20"><path d="M3 5L84 12" stroke="#a8b0b8" stroke-width="1.500"/></svg>
<!-- breadcrumbs -->
<svg class="i" style="left:0;top:751px;color:#999" width="9" height="10"><use href="#cr"/></svg>
<svg class="i" style="left:18px;top:748px;color:#ddd" width="16" height="16"><use href="#sc"/></svg>
<p style="left:42px;top:749px;color:#d0d0d0">Scene</p>
<svg class="i" style="left:88px;top:751px;color:#ccc" width="11" height="11"><use href="#cr"/></svg>
<svg class="i" style="left:105px;top:748px;color:#ddd" width="16" height="16"><use href="#gl"/></svg>
<p style="left:129px;top:749px;color:#d0d0d0">World_Daylight_Environment</p>
<!-- node2 -->
<div style="left:459px;top:735px;width:187px;height:195px;background:#303030"></div>
<div style="left:458px;top:735px;width:1px;height:195px;background:#fff"></div><div style="left:646px;top:735px;width:1px;height:195px;background:#fff"></div>
<p class="nt" style="left:469px;top:735px">Sun direction</p>
<div class="n" style="left:469px;top:755px;width:167px"><div style="width:3px"></div><p style="left:14px">Sky turbidity</p><p class="v">2.40</p></div>
<div class="n" style="left:469px;top:776px;width:167px"><p style="left:14px">Power</p><p class="v">1.00</p></div>
<div class="n" style="left:469px;top:796px;width:167px"><p style="left:14px">Sun intensity</p><p class="v">1.00</p></div>
<div class="n" style="left:469px;top:817px;width:167px"><div style="width:82px"></div><p style="left:14px">North offset</p><p class="v">0.00</p></div>
<p class="nt" style="left:469px;top:838px">Daylight model</p>
<div class="b" style="left:556px;top:837px;width:80px;height:17px;background:#282828"></div><p class="nt" style="left:563px;top:838px;color:#ddd">Hosek-Wil...</p><svg class="i" style="left:626px;top:841px;color:#ccc" width="9" height="9"><use href="#ch"/></svg>
<p class="nt" style="left:469px;top:859px">Sky color:</p><div style="left:553px;top:858px;width:83px;height:17px;background:#3d8fff;border-radius:4px"></div>
<p class="nt" style="left:469px;top:880px">Sunset color:</p><div style="left:553px;top:879px;width:83px;height:17px;background:#cc6327;border-radius:4px"></div>
<div class="n" style="left:469px;top:900px;width:167px"><p style="left:13px">Sun size</p><p class="v">1.00</p></div>
<div style="left:459px;top:919px;width:187px;height:11px;overflow:hidden"><p class="nt" style="left:10px;top:0">Ground color:</p><div style="left:94px;top:1px;width:83px;height:15px;background:#000;border-radius:4px"></div></div>
<div class="so" style="left:454px;top:737px"></div><div class="so" style="left:454px;top:758px"></div><div class="so" style="left:454px;top:779px"></div><div class="so" style="left:454px;top:799px"></div><div class="so" style="left:454px;top:820px"></div><div class="so" style="left:454px;top:840px;background:#c7c7c7"></div><div class="so" style="left:454px;top:861px;background:#8cc4a6"></div><div class="so" style="left:454px;top:882px;background:#8cc4a6"></div><div class="so" style="left:454px;top:902px"></div>
<!-- node3 -->
<div style="left:736px;top:735px;width:140px;height:32px;background:#303030;border-radius:0 0 0 5px"></div>
<div style="left:746px;top:729px;width:100px;height:10px;overflow:hidden"><p class="nt" style="left:0;top:-3px">Environment</p></div>
<p class="nt" style="left:746px;top:747px">Visible Environment</p>
<div class="so" style="left:731px;top:730px;background:#6e6ecb"></div><div class="so" style="left:731px;top:749px;background:#6e6ecb"></div>
<svg class="i" style="left:868px;top:751px;color:#bbb;transform:scaleX(-1)" width="8" height="9"><use href="#cr"/></svg>
<div style="left:870px;top:770px;width:3px;height:55px;background:#2e2e2e"></div>
<div style="left:10px;top:924px;width:800px;height:3px;background:#333;border-radius:2px"></div>
<!-- node header -->
<div style="left:0;top:708px;width:876px;height:27px;background:#1c1c1c;border-radius:5px 5px 0 0"></div>
<div class="b" style="left:8px;top:712px;width:32px;height:19px;background:#232323"></div>
<svg class="i" style="left:12px;top:714px;color:#ddd" width="15" height="15"><use href="#nd"/></svg><svg class="i" style="left:29px;top:718px;color:#ccc" width="9" height="9"><use href="#ch"/></svg>
<div class="b" style="left:45px;top:712px;width:91px;height:19px;background:#232323"></div>
<svg class="i" style="left:49px;top:713px;color:#ddd" width="16" height="16"><use href="#gl"/></svg>
<p style="left:71px;top:715px">World</p><svg class="i" style="left:124px;top:718px;color:#ccc" width="9" height="9"><use href="#ch"/></svg>
<p style="left:148px;top:715px">View</p><p style="left:189px;top:715px">Select</p><p style="left:237px;top:715px">Add</p><p style="left:274px;top:715px">Node</p>
<div class="ck on" style="left:316px;top:715px;height:13px"><svg width="12" height="12"><use href="#ck"/></svg></div>
<p style="left:332px;top:715px;color:#ddd">Use Nodes</p>
<div class="b" style="left:423px;top:712px;width:196px;height:19px;background:#232323"></div>
<svg class="i" style="left:427px;top:713px;color:#ddd" width="16" height="16"><use href="#gl"/></svg><svg class="i" style="left:444px;top:718px;color:#ccc" width="9" height="9"><use href="#ch"/></svg>
<p style="left:462px;top:715px;color:#ddd">World_Daylight_Environment</p>
<div style="left:619px;top:713px;width:20px;height:18px;background:#4772b3"></div>
<svg class="i" style="left:622px;top:715px" width="14" height="14"><path d="M7 0l6 2v5c0 3-3 6-6 7-3-1-6-4-6-7V2z" fill="#fff"/><path d="M4 7l2.500 2.500L10 5" fill="none" stroke="#4772b3" stroke-width="1.500"/></svg>
<div style="left:639px;top:713px;width:20px;height:18px;background:#505050"></div>
<svg class="i" style="left:642px;top:715px;color:#ddd" width="14" height="14"><use href="#co"/></svg>
<div style="left:659px;top:713px;width:19px;height:18px;background:#505050;border-radius:0 4px 4px 0"></div>
<svg class="i" style="left:662px;top:715px;color:#ccc" width="14" height="14"><use href="#x"/></svg>
<svg class="i" style="left:687px;top:714px;color:#999" width="15" height="15"><use href="#pi"/></svg>
<div style="left:746px;top:713px;width:20px;height:18px;background:#333;border-radius:4px"></div>
<svg class="i" style="left:749px;top:715px" width="14" height="14"><path d="M7 14V2M3 6l4-5 4 5" fill="none" stroke="#666"/></svg>
<div style="left:771px;top:713px;width:19px;height:18px;background:#555;border-radius:4px 0 0 4px"></div>
<svg class="i" style="left:773px;top:714px" width="16" height="16"><path d="M3 11a5 5 0 1 1 9 0l-2-2a2.500 2.500 0 1 0-5 0z" fill="none" stroke="#999" stroke-width="1.200" transform="rotate(40 8 8)"/></svg>
<div style="left:790px;top:713px;width:32px;height:18px;background:#282828;border-radius:0 4px 4px 0"></div>
<svg class="i" style="left:794px;top:714px" width="15" height="15"><path d="M0 10h14M0 5h14M10 0v14M5 5v9" stroke="#ccc" fill="none"/><rect x="1" y="0" width="6" height="6" fill="#eee"/></svg>
<svg class="i" style="left:811px;top:718px;color:#ccc" width="9" height="9"><use href="#ch"/></svg>
<div style="left:829px;top:713px;width:19px;height:18px;background:#4772b3;border-radius:4px 0 0 4px"></div>
<svg class="i" style="left:830px;top:714px" width="16" height="16"><circle cx="6" cy="10" r="4.500" fill="none" stroke="#ddd"/><circle cx="10" cy="6" r="4.500" fill="#eee"/></svg>
<div style="left:848px;top:713px;width:20px;height:18px;background:#282828;border-radius:0 4px 4px 0"></div>
<svg class="i" style="left:853px;top:718px;color:#ccc" width="9" height="9"><use href="#ch"/></svg>

<!-- timeline -->
<div style="left:0;top:932px;width:971px;height:72px;background:#1d1d1d;border-radius:5px"></div>
<div style="left:0;top:932px;width:971px;height:25px;background:#303030;border-radius:5px 5px 0 0"></div>
<div class="b" style="left:8px;top:935px;width:32px;height:20px;background:#282828"></div>
<svg class="i" style="left:12px;top:937px" width="15" height="15"><circle cx="7.500" cy="7.500" r="6.500" fill="#ddd"/><path d="M7.500 7.500L14 4v7z" fill="#282828"/></svg>
<svg class="i" style="left:29px;top:941px;color:#ccc" width="9" height="9"><use href="#ch"/></svg>
<div class="b" style="left:45px;top:935px;width:134px;height:20px;background:#282828"></div>
<div style="left:117px;top:936px;width:1px;height:18px;background:#3a3a3a"></div>
<p style="left:53px;top:938px">Playback</p><svg class="i" style="left:106px;top:941px;color:#ccc" width="9" height="9"><use href="#ch"/></svg>
<p style="left:125px;top:938px">Keying</p><svg class="i" style="left:167px;top:941px;color:#ccc" width="9" height="9"><use href="#ch"/></svg>
<p style="left:188px;top:938px">View</p><p style="left:229px;top:938px">Marker</p>
<div style="left:393px;top:935px;width:20px;height:20px;background:#545454;border-radius:4px 0 0 4px"></div>
<div style="left:398px;top:940px;width:10px;height:10px;border-radius:5px;background:#eee"></div>
<div style="left:413px;top:935px;width:19px;height:20px;background:#3e3e3e;border-radius:0 4px 4px 0"></div><svg class="i" style="left:418px;top:941px;color:#666" width="9" height="9"><use href="#ch"/></svg>
<div style="left:438px;top:935px;width:119px;height:20px;background:#545454;border-radius:4px"></div>
<svg class="i" style="left:438px;top:935px" width="119" height="20"><path d="M20 0v20M40 0v20M60 0v20M80 0v20M100 0v20" stroke="#3e3e3e"/><path d="M5 5h2v10H5zM16 5v10L8 10zM22 10l5-5 5 5-5 5zM38 6v8l-5-4zM56 4v12L44 10zM63 4v12l12-6zM83 6v8l5-4zM89 10l5-5 5 5-5 5zM105 5v10l8-5zM114 5h2v10h-2z" fill="#eee"/></svg>
<div style="left:690px;top:935px;width:73px;height:20px;background:#545454;border-radius:4px;text-align:center;line-height:21px;color:#d8d8d8">1</div>
<div style="left:770px;top:935px;width:193px;height:20px;background:#545454;border-radius:4px"></div>
<div style="left:788px;top:935px;width:1px;height:20px;background:#3a3a3a"></div><div style="left:878px;top:935px;width:1px;height:20px;background:#3a3a3a"></div>
<svg class="i" style="left:772px;top:937px" width="15" height="16"><path d="M5 .5h5M7.500.5v2" stroke="#ddd" fill="none"/><circle cx="7.500" cy="9" r="6" fill="none" stroke="#ddd" stroke-width="1.200"/><path d="M7.500 5v4h3" stroke="#ddd" fill="none"/></svg>
<p style="left:804px;top:938px;color:#d8d8d8">Start</p><p style="left:858px;top:938px;color:#d8d8d8">1</p>
<p style="left:894px;top:938px;color:#d8d8d8">End</p><p style="left:928px;top:938px;color:#d8d8d8">250</p>
<p class="num" style="left:84px">20</p><p class="num" style="left:156px">40</p><p class="num" style="left:229px">60</p><p class="num" style="left:301px">80</p><p class="num" style="left:373px">100</p><p class="num" style="left:446px">120</p><p class="num" style="left:518px">140</p><p class="num" style="left:590px">160</p><p class="num" style="left:662px">180</p><p class="num" style="left:734px">200</p><p class="num" style="left:807px">220</p><p class="num" style="left:879px">240</p>
<div style="left:36px;top:980px;width:899px;height:23px;background:#2b2b2b"></div>
<div class="tick" style="left:68px"></div><div class="tick" style="left:104px"></div><div class="tick" style="left:140px"></div><div class="tick" style="left:177px"></div><div class="tick" style="left:213px"></div><div class="tick" style="left:249px"></div><div class="tick" style="left:285px"></div><div class="tick" style="left:321px"></div><div class="tick" style="left:357px"></div><div class="tick" style="left:393px"></div><div class="tick" style="left:430px"></div><div class="tick" style="left:466px"></div><div class="tick" style="left:502px"></div><div class="tick" style="left:538px"></div><div class="tick" style="left:574px"></div><div class="tick" style="left:610px"></div><div class="tick" style="left:646px"></div><div class="tick" style="left:682px"></div><div class="tick" style="left:719px"></div><div class="tick" style="left:755px"></div><div class="tick" style="left:791px"></div><div class="tick" style="left:827px"></div><div class="tick" style="left:863px"></div><div class="tick" style="left:899px"></div><div class="tick" style="left:935px"></div>
<div style="left:9px;top:993px;width:953px;height:7px;background:#545454;border-radius:4px"></div>
<div style="left:10px;top:994px;width:5px;height:5px;background:#2b2b2b;border-radius:3px"></div><div style="left:955px;top:994px;width:5px;height:5px;background:#2b2b2b;border-radius:3px"></div>
<div style="left:35px;top:977px;width:2px;height:26px;background:#4772b3"></div>
<div style="left:25px;top:960px;width:23px;height:17px;background:#4772b3;border-radius:4px;text-align:center;line-height:18px;color:#fff">1</div>
<svg class="i" style="left:0;top:974px;color:#777" width="8" height="9"><use href="#cr"/></svg>
<svg class="i" style="left:964px;top:974px;color:#777;transform:scaleX(-1)" width="8" height="9"><use href="#cr"/></svg>
<div style="left:966px;top:966px;width:3px;height:28px;background:#333"></div>

<!-- status -->
<div style="left:0;top:1004px;width:1280px;height:20px;background:#181818"></div>
<svg class="i" style="left:10px;top:1005px;color:#aaa" width="15" height="16"><use href="#ms"/></svg>
<div style="left:13px;top:1006px;width:5px;height:7px;background:#aaa"></div>
<svg class="i" style="left:221px;top:1005px;color:#aaa" width="15" height="16"><use href="#ms"/></svg>
<div style="left:227px;top:1008px;width:3px;height:6px;background:#aaa"></div>
<p style="left:245px;top:1007px;color:#8a8a8a">Zoom 2D View</p>
<svg class="i" style="left:432px;top:1005px;color:#aaa" width="15" height="16"><use href="#ms"/></svg>
<div style="left:440px;top:1006px;width:5px;height:7px;background:#aaa"></div>
<p style="left:1240px;top:1007px;color:#8a8a8a">4.0.2</p>
</body></html>
